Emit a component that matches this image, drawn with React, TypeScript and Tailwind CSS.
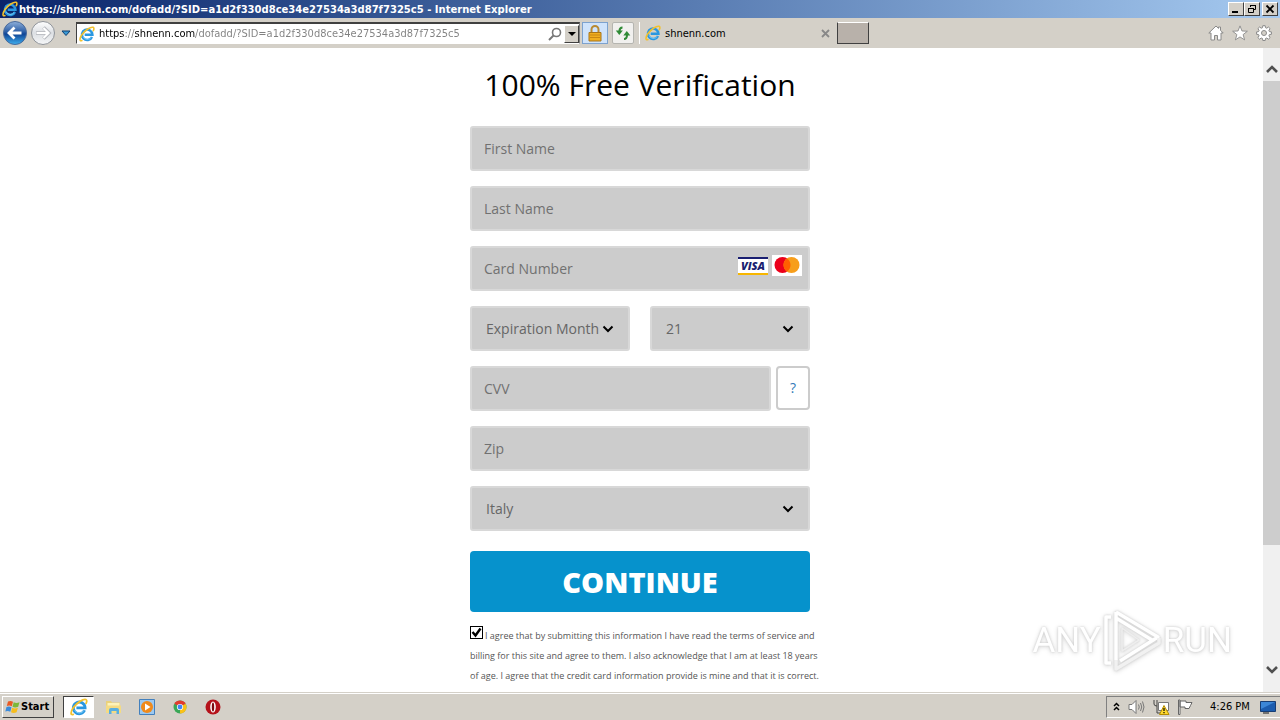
import React, { FC, ReactNode } from 'react';

interface IconProps {
  className?: string;
}

interface FieldProps {
  id: string;
  label: string;
}

interface SelectFieldProps extends FieldProps {
  options: string[];
}

const uiText = "font-['DejaVu_Sans_Condensed','DejaVu_Sans',sans-serif] text-[11px] pt-[2px]";

const IeLogo: FC<IconProps> = ({ className }) => (
  <svg viewBox="0 0 18 18" className={className} fill="none" aria-hidden="true">
    <path
      d="M14.600 12.300A5.900 5.900 0 1 1 15.100 9.800H6.400"
      stroke="#2a97e0"
      strokeWidth="2.800"
    />
    <path
      d="M13.900 12.600A5.300 5.300 0 0 1 4.600 12"
      stroke="#7fd0fa"
      strokeWidth="1"
    />
    <path
      d="M3.200 16.400C.2 17.600.6 13.600 3.400 9.600 6.800 4.800 13.300.5 15.900 1.500c1.200.5 1 2.300.2 3.800"
      stroke="#f2c12d"
      strokeWidth="1.800"
      strokeLinecap="round"
    />
  </svg>
);

const WindowButton: FC<{ label: string; children: ReactNode }> = ({ label, children }) => (
  <button
    aria-label={label}
    className="flex h-[14px] w-4 items-center justify-center border border-t-white border-l-white border-r-[#404040] border-b-[#404040] bg-[#d4d0c8]"
  >
    <svg viewBox="0 0 12 10" className="h-[10px] w-3" fill="none" stroke="#000">
      {children}
    </svg>
  </button>
);

const TitleBar: FC = () => (
  <div className="flex h-[18px] items-center bg-linear-to-r from-[#0a246a] to-[#a6caf0] pr-[2px] pl-[2px]">
    <IeLogo className="h-4 w-4" />
    <span className="ml-px flex-1 truncate pt-px font-['DejaVu_Sans',sans-serif] text-[10px] font-bold text-white">
      https://shnenn.com/dofadd/?SID=a1d2f330d8ce34e27534a3d87f7325c5 - Internet Explorer
    </span>
    <div className="flex">
      <WindowButton label="Minimize">
        <path d="M2 8h6" strokeWidth="2" />
      </WindowButton>
      <WindowButton label="Restore">
        <path d="M4.500 3V1.500h5v4H8M4 1.500h6M2.500 4.500h5v4h-5zM2 4.500h6" />
      </WindowButton>
      <div className="ml-[2px]">
        <WindowButton label="Close">
          <path d="M2.500 1.500l7 7M9.500 1.500l-7 7" strokeWidth="1.800" />
        </WindowButton>
      </div>
    </div>
  </div>
);

const NavButtons: FC = () => (
  <div className="flex items-center">
    <button aria-label="Back">
      <svg viewBox="0 0 26 26" className="h-[26px] w-[26px]" fill="none">
        <defs>
          <linearGradient id="back" x1="0" y1="0" x2="0" y2="1">
            <stop offset="0" stopColor="#8fb0da" />
            <stop offset=".45" stopColor="#2c5ea6" />
            <stop offset=".55" stopColor="#0f4596" />
            <stop offset="1" stopColor="#3fb0f0" />
          </linearGradient>
        </defs>
        <circle cx="13" cy="13" r="11.500" fill="url(#back)" stroke="#4a6a9a" />
        <path d="M19.500 13H8M12.500 7.500L7 13l5.500 5.500" stroke="#fff" strokeWidth="2.800" />
      </svg>
    </button>
    <button aria-label="Forward" className="ml-[2px]">
      <svg viewBox="0 0 26 26" className="h-[26px] w-[26px]" fill="none">
        <defs>
          <linearGradient id="forward" x1="0" y1="0" x2="0" y2="1">
            <stop offset="0" stopColor="#fff" />
            <stop offset=".5" stopColor="#dcdfe3" />
            <stop offset="1" stopColor="#f6f7f8" />
          </linearGradient>
        </defs>
        <circle cx="13" cy="13" r="11.500" fill="url(#forward)" stroke="#8f9399" />
        <path d="M6 13h12M13.500 7.500L19 13l-5.500 5.500" stroke="#b4b7bc" strokeWidth="3.600" />
        <path d="M6.500 13H18M13.500 8L18.500 13l-5 5" stroke="#fff" strokeWidth="2.200" />
      </svg>
    </button>
    <button aria-label="Recent pages" className="ml-[5px]">
      <svg viewBox="0 0 10 7" className="h-[7px] w-[10px]">
        <path d="M1 1h8L5 5.500z" fill="#3b9bd6" stroke="#0d3f73" />
      </svg>
    </button>
  </div>
);

const AddressBar: FC = () => (
  <div className="flex h-[22px] w-[504px] items-center border border-t-2 border-t-[#404040] border-l-[#404040] border-r-[#808080] border-b-white bg-white pl-[2px]">
    <IeLogo className="h-4 w-4" />
    {/* host part stays dark, the rest of the address is dimmed */}
    <input
      type="text"
      aria-label="Address"
      defaultValue="https://shnenn.com/dofadd/?SID=a1d2f330d8ce34e27534a3d87f7325c5"
      className={`${uiText} ml-1 min-w-0 flex-1 bg-[linear-gradient(to_right,#000_26px,#808080_26px,#808080_36px,#000_36px,#000_96px,#808080_96px)] bg-clip-text text-transparent outline-none`}
    />
    <button aria-label="Search" className="mr-[2px]">
      <svg viewBox="0 0 14 14" className="h-[14px] w-[14px]" fill="none" stroke="#777">
        <circle cx="8.500" cy="5.500" r="4" strokeWidth="1.600" />
        <path d="M5.500 8.500L1 13" strokeWidth="2" />
      </svg>
    </button>
    <button
      aria-label="Show address history"
      className="flex h-[18px] w-[15px] items-center justify-center border border-t-white border-l-white border-r-[#404040] border-b-[#404040] bg-[#d4d0c8]"
    >
      <svg viewBox="0 0 8 4" className="h-1 w-2">
        <path d="M0 0h8L4 4z" fill="#000" />
      </svg>
    </button>
  </div>
);

const ToolBar: FC = () => (
  <div className="flex h-[30px] items-center bg-[#d4d0c8] pl-[2px]">
    <NavButtons />
    <div className="ml-[5px]">
      <AddressBar />
    </div>
    <button
      aria-label="Security report"
      className="ml-[2px] flex h-[22px] w-[26px] items-center justify-center border border-[#7da2ce] bg-[#cfe3fb]"
    >
      <svg viewBox="0 0 14 17" className="h-[17px] w-[14px]" fill="none">
        <path d="M3.500 8V4.500a3.500 3.500 0 0 1 7 0V8" stroke="#b98a32" strokeWidth="2" />
        <path d="M1 7.500h12V16H1z" fill="#f0ae1e" stroke="#a8741a" />
        <path d="M2 10h10M2 12.500h10" stroke="#c98712" />
      </svg>
    </button>
    <button
      aria-label="Refresh"
      className="ml-1 flex h-[22px] w-[22px] items-center justify-center rounded-xs border border-[#b5b5b0] bg-[#f1f0ee]"
    >
      <svg viewBox="0 0 16 14" className="h-[14px] w-4" fill="none" stroke="#2f8a35" strokeWidth="2">
        <path d="M7.500 1.500C5 1.500 4.500 3 4.500 5" />
        <path d="M9 13c2.500 0 3-1.500 3-4" />
        <path d="M.8 4.500h7L4.300 9z" fill="#2f8a35" stroke="none" />
        <path d="M8.300 9.500h7L11.800 5z" fill="#2f8a35" stroke="none" />
      </svg>
    </button>
    <div className="ml-[5px] flex h-[22px] w-[198px] items-center border-l border-white pl-[5px]">
      <IeLogo className="h-4 w-4" />
      <span className={`${uiText} ml-1 flex-1 text-black`}>shnenn.com</span>
      <button aria-label="Close tab" className="mr-[7px]">
        <svg viewBox="0 0 9 9" className="h-[9px] w-[9px]" stroke="#888" strokeWidth="1.800">
          <path d="M1 1l7 7M8 1l-7 7" />
        </svg>
      </button>
    </div>
    <button
      aria-label="New tab"
      className="h-[22px] w-8 border border-t-white border-l-[#404040] border-r-[#404040] border-b-[#404040] bg-[#b8b1aa]"
    />
    <div className="ml-auto flex items-center gap-2 pr-2">
      <button aria-label="Home">
        <svg viewBox="0 0 16 16" className="h-4 w-4" fill="#fff" stroke="#8a8a8a">
          <path d="M8 1L.8 8h2.200v7h3.500v-4.500h3V15H13V8h2.200L12.500 5.300V2h-2v1.400z" />
        </svg>
      </button>
      <button aria-label="Favorites">
        <svg viewBox="0 0 18 18" className="h-4 w-4" fill="#fff" stroke="#8a8a8a">
          <path d="M9 1l2.200 5.700 6.100.3-4.800 3.800 1.700 5.900L9 13.400l-5.200 3.300 1.700-5.900L.7 7l6.100-.3z" />
        </svg>
      </button>
      <button aria-label="Tools">
        <svg viewBox="0 0 16 16" className="h-4 w-4" fill="#fff" stroke="#8a8a8a">
          <path d="M6.800.700h2.400l.3 2 1.300.5 1.600-1.200 1.700 1.700-1.200 1.600.5 1.300 2 .3v2.400l-2 .3-.5 1.300 1.200 1.600-1.700 1.700-1.600-1.200-1.300.5-.3 2H6.800l-.3-2-1.300-.5-1.600 1.200-1.700-1.700 1.200-1.600-.5-1.300-2-.3V6.900l2-.3.5-1.300-1.200-1.600L3.600 2l1.600 1.200 1.300-.5z" />
          <circle cx="8" cy="8" r="2.500" fill="#d4d0c8" />
        </svg>
      </button>
    </div>
  </div>
);

const fieldStyle =
  'h-[45px] w-full rounded-[3px] border-2 border-[#d8d8d8] bg-[#ccc] text-sm text-[#666] outline-none placeholder:text-[#717171]';

const TextField: FC<FieldProps> = ({ id, label }) => (
  <input id={id} type="text" aria-label={label} placeholder={label} className={`${fieldStyle} px-3`} />
);

const SelectField: FC<SelectFieldProps> = ({ id, label, options }) => (
  <div className="relative w-full">
    <select id={id} aria-label={label} className={`${fieldStyle} appearance-none pl-[14px]`}>
      {options.map((option) => (
        <option key={option}>{option}</option>
      ))}
    </select>
    <svg
      viewBox="0 0 12 8"
      className="pointer-events-none absolute top-[19px] right-4 h-2 w-3"
      fill="none"
      stroke="#000"
      strokeWidth="2"
    >
      <path d="M1.500 1.500L6 6l4.500-4.500" />
    </svg>
  </div>
);

const CardBrands: FC = () => (
  <div className="pointer-events-none absolute top-[9px] right-2 flex items-center gap-1">
    <div className="flex h-[18px] w-[30px] items-center justify-center border-t-2 border-b-2 border-t-[#1a1f71] border-b-[#f7b600] bg-white font-['Open_Sans',sans-serif] text-[11px] leading-none font-extrabold text-[#1a1f71] italic">
      VISA
    </div>
    <svg viewBox="0 0 30 21" className="h-[21px] w-[30px] bg-white">
      <circle cx="10.500" cy="10" r="8" fill="#eb001b" />
      <circle cx="19.500" cy="10" r="8" fill="#f79e1b" />
      <path d="M15 3.400a8 8 0 0 1 0 13.200 8 8 0 0 1 0-13.200z" fill="#ff5f00" />
    </svg>
  </div>
);

const VerificationForm: FC = () => (
  <form
    className="mx-auto w-[340px] pt-4 font-['Open_Sans',sans-serif]"
    onSubmit={(e) => e.preventDefault()}
  >
    <h1 className="text-center text-[30px] leading-[42px] whitespace-nowrap text-black">
      100% Free Verification
    </h1>
    <div className="mt-5 flex flex-col gap-[15px]">
      <TextField id="first-name" label="First Name" />
      <TextField id="last-name" label="Last Name" />
      <div className="relative">
        <TextField id="card-number" label="Card Number" />
        <CardBrands />
      </div>
      <div className="flex gap-5">
        <SelectField id="exp-month" label="Expiration Month" options={['Expiration Month']} />
        <SelectField id="exp-year" label="Expiration Year" options={['21']} />
      </div>
      <div className="flex gap-[5px]">
        <TextField id="cvv" label="CVV" />
        <a
          href="#cvv"
          className="flex h-11 w-[34px] shrink-0 items-center justify-center rounded-sm border-2 border-[#ccc] bg-white text-sm text-[#337ab7]"
        >
          ?
        </a>
      </div>
      <TextField id="zip" label="Zip" />
      <SelectField id="country" label="Country" options={['Italy']} />
    </div>
    <button
      type="submit"
      className="mt-5 h-[61px] w-full rounded-sm bg-[#0692cc] text-[29px] font-extrabold text-white"
    >
      CONTINUE
    </button>
    <div className="relative mt-[14px] text-[9px] leading-5 whitespace-nowrap text-[#555]">
      <input
        id="agree"
        type="checkbox"
        defaultChecked
        className="peer mr-[2px] h-[13px] w-[13px] appearance-none border border-black bg-white align-[0px]"
      />
      <svg
        viewBox="0 0 13 13"
        className="pointer-events-none absolute top-0 left-0 hidden h-[13px] w-[13px] peer-checked:block"
        fill="none"
        stroke="#000"
        strokeWidth="2.400"
      >
        <path d="M2.500 6l3 3.500 5-7" />
      </svg>
      <label htmlFor="agree">
        I agree that by submitting this information I have read the terms of service and
        <br />
        billing for this site and agree to them. I also acknowledge that I am at least 18 years
        <br />
        of age. I agree that the credit card information provide is mine and that it is correct.
      </label>
    </div>
  </form>
);

const ScrollBar: FC = () => (
  <div className="absolute inset-y-0 right-0 flex w-[17px] flex-col bg-[#f0f0f0]">
    <svg viewBox="0 0 17 33" className="h-[33px] w-[17px]" fill="none" stroke="#505050" strokeWidth="2.600">
      <path d="M4 24l5-5 5 5" />
    </svg>
    <div className="h-[72%] shrink-0 bg-[#cdcdcd]" />
    <svg viewBox="0 0 17 33" className="mt-auto h-[33px] w-[17px]" fill="none" stroke="#505050" strokeWidth="2.600">
      <path d="M4 8l5 5 5-5" />
    </svg>
  </div>
);

const Watermark: FC = () => (
  <div className="pointer-events-none absolute right-12 bottom-5 flex items-center font-['Roboto',sans-serif] text-[35px] leading-none text-white [filter:drop-shadow(0_0_1px_#ccc)_drop-shadow(0_1px_2px_#ddd)]">
    <span>ANY</span>
    <svg viewBox="0 0 62 64" className="h-16 w-[62px]" fill="none" stroke="#fff" strokeWidth="3.500" strokeLinejoin="round">
      <path d="M15 8v44M15 4l42 25-38 24M15 4v6l36 22" />
      <path d="M10 9H5v46h5" />
      <path d="M15 52v9l43-26v-5" stroke="#f1f1f1" />
      <path d="M21 20v23l17-11z" stroke="#eee" strokeWidth="1.500" />
    </svg>
    <span>RUN</span>
  </div>
);

const WindowsFlag: FC = () => (
  <svg viewBox="0 0 16 16" className="h-4 w-4" aria-hidden="true">
    <path d="M3 2.500C5 1.500 6.500 1.800 8 2.800L6.800 7.300C5.200 6.300 3.600 6.200 1.800 7z" fill="#ea5a24" />
    <path d="M8.700 3.200c1.800.9 3.600.9 5.800 0l-1.300 4.500c-2 .9-4 .9-5.700 0z" fill="#7cb83a" />
    <path d="M1.500 8c1.700-.8 3.400-.7 5 .3L5.300 12.800C3.700 11.800 2 11.700.300 12.500z" fill="#3b8bdb" />
    <path d="M7.200 8.700c1.800.9 3.700.9 5.700 0l-1.300 4.500c-2 .9-3.900.9-5.600 0z" fill="#f6bd1d" />
  </svg>
);

const TaskBar: FC = () => (
  <div className="flex h-7 items-center border-t border-[#d4d0c8] bg-[#d4d0c8] pl-[2px] text-black shadow-[inset_0_1px_0_#fff]">
    <button className="flex h-[22px] w-[52px] items-center border border-t-white border-l-white border-r-[#404040] border-b-[#404040] pl-[2px]">
      <WindowsFlag />
      <span className={`${uiText} font-bold`}>Start</span>
    </button>
    <button
      aria-label="Internet Explorer"
      className="ml-[9px] flex h-[22px] w-[31px] items-center justify-center border border-t-[#404040] border-l-[#404040] border-r-white border-b-white bg-white"
    >
      <IeLogo className="h-[18px] w-[18px]" />
    </button>
    <div className="ml-[11px] flex items-center gap-[17px]">
      <button aria-label="Explorer">
        <svg viewBox="0 0 17 16" className="h-4 w-[17px]">
          <path d="M1 2h5l1 1.500h8V13H1z" fill="#ead17a" />
          <path d="M2.500 4h12v7h-12z" fill="#fdf2b8" />
          <path d="M1 6.500h15V14H1z" fill="#f4db83" />
          <path d="M4 15v-4q0-2 2-2h6q2 0 2 2v4h-2.500v-3h-5v3z" fill="#58aee0" />
        </svg>
      </button>
      <button aria-label="Media Player">
        <svg viewBox="0 0 16 16" className="h-4 w-4">
          <path d="M.5.500h15v15H.500z" fill="#9cc9f1" stroke="#4380bd" />
          <circle cx="8" cy="8" r="6" fill="#f08a1b" />
          <path d="M6 4.500v7L11.500 8z" fill="#fff" />
        </svg>
      </button>
      <button aria-label="Chrome">
        <svg viewBox="0 0 16 16" className="h-4 w-4">
          <circle cx="8" cy="8" r="6.500" fill="#3aa757" />
          <path d="M8 8L2.400 4.700a6.500 6.500 0 0 1 11.200 0z" fill="#e33b2e" />
          <path d="M8 8l5.600-3.300A6.500 6.500 0 0 1 8 14.500z" fill="#fbc116" />
          <circle cx="8" cy="8" r="3.100" fill="#fff" />
          <circle cx="8" cy="8" r="2.400" fill="#4285f4" />
        </svg>
      </button>
      <button aria-label="Opera">
        <svg viewBox="0 0 16 16" className="h-4 w-4">
          <circle cx="8" cy="8" r="7.500" fill="#b5121b" />
          <ellipse cx="8" cy="8" rx="2.800" ry="5.500" fill="#fff" />
          <ellipse cx="8" cy="8" rx="1.200" ry="4.600" fill="#7c0a10" />
        </svg>
      </button>
    </div>
    <div className="ml-auto flex h-[22px] w-[174px] items-center border border-t-[#808080] border-l-[#808080] border-r-0 border-b-white pl-[6px]">
      <button aria-label="Show hidden icons">
        <svg viewBox="0 0 7 9" className="h-[9px] w-[7px]" fill="none" stroke="#000" strokeWidth="1.500">
          <path d="M1 4l2.500-2.500L6 4M1 8l2.500-2.500L6 8" />
        </svg>
      </button>
      <svg viewBox="0 0 17 16" className="ml-2 h-4 w-[17px]" fill="none" stroke="#777">
        <path d="M1 5.500h3l4-4v13l-4-4H1z" fill="#fff" />
        <path d="M10.500 5.500q1.500 2.500 0 5M12.500 4q2.500 4 0 8M14.500 2.500q3 5.500 0 11" />
      </svg>
      <svg viewBox="0 0 17 16" className="ml-2 h-4 w-[17px]" fill="none">
        <path d="M1 1v4q0 2 3 2V1M4 7v7h3" stroke="#444" />
        <path d="M5.500 3.500h10v8h-10z" fill="#fff" stroke="#777" />
        <path d="M11 6.500l5 9H6.500z" fill="#ffd92e" stroke="#b48c00" />
        <path d="M11 9v3M11 13v1.200" stroke="#000" strokeWidth="1.200" />
      </svg>
      <svg viewBox="0 0 17 16" className="ml-[7px] h-4 w-[17px]" fill="#fff" stroke="#666">
        <path d="M1.500 1v14.500h1.500V1zM3 2h6v1.500h6L13.500 6.500 12 9.500H8V8H3z" />
      </svg>
      <span className={`${uiText} ml-4 flex-1 whitespace-nowrap`}>4:26 PM</span>
      <svg viewBox="0 0 16 14" className="mr-1 h-[14px] w-4">
        <path d="M.5 1.500h15v10H.500z" fill="#1b5cae" stroke="#173d73" />
        <path d="M1 2h14L1 9z" fill="#3b86d6" />
        <path d="M3 13h6" stroke="#555" strokeWidth="1.500" />
      </svg>
    </div>
  </div>
);

const App: FC = () => {
  return (
    <div className="flex h-screen flex-col overflow-hidden bg-white">
      <TitleBar />
      <ToolBar />
      <main className="relative min-h-0 flex-1 overflow-hidden bg-white">
        <VerificationForm />
        <Watermark />
        <ScrollBar />
      </main>
      <TaskBar />
    </div>
  );
};

export default App;
